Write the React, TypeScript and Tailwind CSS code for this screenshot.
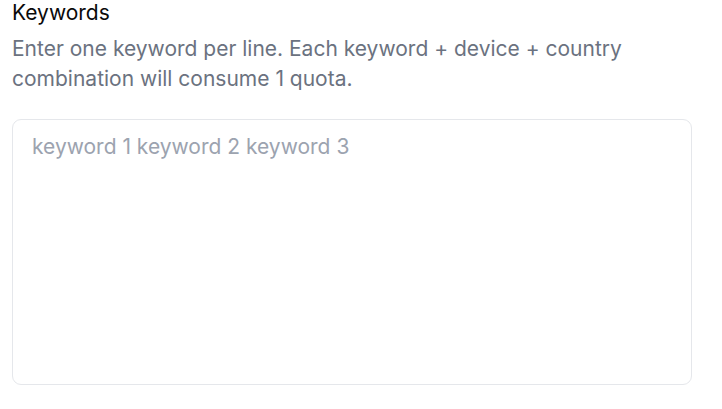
import React from "react";

export default function App() {
  return (
    <div
      className="min-h-screen bg-white px-[12px]"
      style={{ fontFamily: "Inter, 'Noto Sans', sans-serif" }}
    >
      <label className="block text-[21px] leading-[25px] font-normal text-[#0a0a0a]">
        Keywords
      </label>
      <p className="mt-[9px] w-[660px] text-[21px] leading-[30px] text-[#6b7280]">
        Enter one keyword per line. Each keyword + device + country combination will consume 1 quota.
      </p>
      <textarea
        className="mt-[25px] block h-[266px] w-[680px] resize-none rounded-[9px] border border-[#e5e7eb] px-[19px] py-[12px] text-[21px] leading-[30px] text-[#111827] placeholder:text-[#9ca3af] outline-none"
        placeholder="keyword 1 keyword 2 keyword 3"
      />
    </div>
  );
}
